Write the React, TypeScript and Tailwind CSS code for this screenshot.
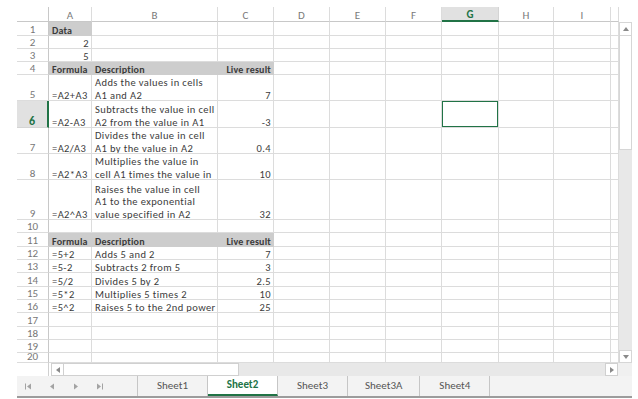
import React from 'react';

type Cell = { t?: string | string[]; b?: boolean; f?: boolean; r?: boolean };
type Row = { n: number; c: Cell[] };

const rows: Row[] = [
  { n: 1, c: [{ t: 'Data', b: true, f: true }] },
  { n: 2, c: [{ t: '2', r: true }] },
  { n: 3, c: [{ t: '5', r: true }] },
  { n: 4, c: [{ t: 'Formula', b: true, f: true }, { t: 'Description', b: true, f: true }, { t: 'Live result', b: true, f: true, r: true }] },
  { n: 5, c: [{ t: '=A2+A3' }, { t: ['Adds the values in cells', 'A1 and A2'] }, { t: '7', r: true }] },
  { n: 6, c: [{ t: '=A2-A3' }, { t: ['Subtracts the value in cell', 'A2 from the value in A1'] }, { t: '-3', r: true }] },
  { n: 7, c: [{ t: '=A2/A3' }, { t: ['Divides the value in cell', 'A1 by the value in A2'] }, { t: '0.4', r: true }] },
  { n: 8, c: [{ t: '=A2*A3' }, { t: ['Multiplies the value in', 'cell A1 times the value in'] }, { t: '10', r: true }] },
  { n: 9, c: [{ t: '=A2^A3' }, { t: ['Raises the value in cell', 'A1 to the exponential', 'value specified in A2'] }, { t: '32', r: true }] },
  { n: 10, c: [] },
  { n: 11, c: [{ t: 'Formula', b: true, f: true }, { t: 'Description', b: true, f: true }, { t: 'Live result', b: true, f: true, r: true }] },
  { n: 12, c: [{ t: '=5+2' }, { t: 'Adds 5 and 2' }, { t: '7', r: true }] },
  { n: 13, c: [{ t: '=5-2' }, { t: 'Subtracts 2 from 5' }, { t: '3', r: true }] },
  { n: 14, c: [{ t: '=5/2' }, { t: 'Divides 5 by 2' }, { t: '2.5', r: true }] },
  { n: 15, c: [{ t: '=5*2' }, { t: 'Multiplies 5 times 2' }, { t: '10', r: true }] },
  { n: 16, c: [{ t: '=5^2' }, { t: 'Raises 5 to the 2nd power' }, { t: '25', r: true }] },
  { n: 17, c: [] },
  { n: 18, c: [] },
  { n: 19, c: [] },
  { n: 20, c: [] },
];

const letters = ['A', 'B', 'C', 'D', 'E', 'F', 'G', 'H', 'I', ''];

function DataCell({ cell, selected }: { cell?: Cell; selected?: boolean }) {
  const fill = cell?.f;
  const lines = cell?.t === undefined ? [] : Array.isArray(cell.t) ? cell.t : [cell.t];
  return (
    <div
      className={
        'relative flex flex-col justify-end overflow-hidden whitespace-nowrap border-r border-b leading-[12.5px] text-[#3b3b3b] ' +
        (fill ? 'bg-[#cdcdcd] border-[#cdcdcd] ' : 'border-[#dcdcdc] ') +
        (cell?.r ? 'items-end pr-[2px] ' : 'items-start pl-[3px] ') +
        (cell?.b ? 'text-[10px] font-bold tracking-[0.2px]' : 'text-[10.5px] font-normal tracking-[0.4px]')
      }
    >
      {lines.map((l, i) => (
        <span key={i} className="block last:mb-[-2px]">{l}</span>
      ))}
      {selected && <div className="absolute inset-[-1px] border-2 border-[#217346]" />}
    </div>
  );
}

function Tri({ dir }: { dir: 'l' | 'r' | 'u' | 'd' }) {
  const p = {
    l: '4,0 4,6 0,3',
    r: '0,0 0,6 4,3',
    u: '0,4 6,4 3,0',
    d: '0,0 6,0 3,4',
  }[dir];
  const w = dir === 'l' || dir === 'r' ? 4 : 6;
  const h = dir === 'l' || dir === 'r' ? 6 : 4;
  return (
    <svg width={w} height={h} viewBox={`0 0 ${w} ${h}`}>
      <polygon points={p} fill="#8a8a8a" />
    </svg>
  );
}

function NavIcon({ kind }: { kind: 0 | 1 | 2 | 3 }) {
  return (
    <svg width="8" height="7" viewBox="0 0 8 7">
      {kind === 0 && (
        <>
          <rect x="1" y="0.5" width="1" height="6" fill="#a3a3a3" />
          <polygon points="7,0.5 7,6.5 3,3.5" fill="#a3a3a3" />
        </>
      )}
      {kind === 1 && <polygon points="6,0.5 6,6.5 2,3.5" fill="#a3a3a3" />}
      {kind === 2 && <polygon points="2,0.5 2,6.5 6,3.5" fill="#a3a3a3" />}
      {kind === 3 && (
        <>
          <polygon points="1,0.5 1,6.5 5,3.5" fill="#a3a3a3" />
          <rect x="6" y="0.5" width="1" height="6" fill="#a3a3a3" />
        </>
      )}
    </svg>
  );
}

export default function App() {
  const sheets = ['Sheet1', 'Sheet2', 'Sheet3', 'Sheet3A', 'Sheet4'];
  return (
    <div
      className="w-[638px] h-[399px] overflow-hidden bg-white pl-[17px] pt-[7px]"
      style={{ fontFamily: "Carlito, Lato, 'Liberation Sans', sans-serif" }}
    >
      <div className="flex w-[615px] flex-col">
        {/* grid + vertical scrollbar */}
        <div className="flex h-[356px]">
          <div className="h-[356px] w-[602px] overflow-hidden">
            <div className="grid grid-cols-[32px_43px_126px_56px_56px_56px_56px_57px_55px_57px_8px] grid-rows-[15px_14px_13px_13px_13px_26px_27px_26px_26px_40px_13px_14px_13px_13px_14px_13px_13px_14px_13px_13px_10px]">
              {/* header row */}
              <div className="border-r border-b border-[#c8c8c8]" />
              {letters.map((l, i) =>
                l === 'G' ? (
                  <div
                    key={i}
                    className="flex items-center justify-center border-r border-r-[#d4d4d4] border-b-2 border-b-[#217346] bg-[#e1e1e1] pt-[2px] text-[11px] font-bold leading-none text-[#217346]"
                  >
                    {l}
                  </div>
                ) : (
                  <div
                    key={i}
                    className="flex items-center justify-center border-r border-b border-r-[#dcdcdc] border-b-[#c8c8c8] pt-[2px] text-[11px] leading-none text-[#7a7a7a]"
                  >
                    {l}
                  </div>
                )
              )}
              {rows.map((row) => (
                <React.Fragment key={row.n}>
                  {row.n === 6 ? (
                    <div className="flex items-end justify-center border-b border-b-[#d4d4d4] border-r-2 border-r-[#217346] bg-[#e1e1e1] text-[12px] font-bold leading-[11px] text-[#217346]">
                      {row.n}
                    </div>
                  ) : (
                    <div className="flex items-end justify-center border-r border-b border-r-[#c8c8c8] border-b-[#dcdcdc] text-[11px] leading-[10px] text-[#777777]">
                      {row.n}
                    </div>
                  )}
                  {letters.map((l, ci) => (
                    <DataCell key={ci} cell={row.c[ci]} selected={row.n === 6 && l === 'G'} />
                  ))}
                </React.Fragment>
              ))}
            </div>
          </div>
          {/* vertical scrollbar */}
          <div className="flex w-[13px] flex-col">
            <div className="h-[15px] bg-white" />
            <div className="flex flex-1 flex-col bg-[#e8e8e8]">
              <div className="flex h-[14px] items-center justify-center border border-[#d6d6d6] bg-white">
                <Tri dir="u" />
              </div>
              <div className="h-[114px] border-x border-b border-[#d6d6d6] bg-white" />
              <div className="flex-1" />
              <div className="flex h-[13px] items-center justify-center border border-[#d6d6d6] bg-white">
                <Tri dir="d" />
              </div>
            </div>
          </div>
        </div>

        {/* horizontal scrollbar */}
        <div className="flex h-[13px]">
          <div className="w-[32px] border-r border-[#d0d0d0] bg-white" />
          <div className="flex flex-1 bg-[#e8e8e8]">
            <div className="w-[2px] bg-white" />
            <div className="flex w-[13px] items-center justify-center border border-[#d0d0d0] bg-white">
              <Tri dir="l" />
            </div>
            <div className="w-[175px] border-y border-r border-[#d0d0d0] bg-white" />
            <div className="flex-1" />
            <div className="flex w-[13px] items-center justify-center border border-[#d0d0d0] bg-white">
              <Tri dir="r" />
            </div>
            <div className="w-[14px] bg-[#f0f0f0]" />
          </div>
        </div>

        {/* sheet tabs */}
        <div className="flex h-[20px] bg-[#f3f3f3]">
          <div className="flex w-[120px] items-center gap-[16px] pl-[7px]">
            <NavIcon kind={0} />
            <NavIcon kind={1} />
            <NavIcon kind={2} />
            <NavIcon kind={3} />
          </div>
          <div className="flex border-l border-[#c6c6c6]">
            {sheets.map((s) =>
              s === 'Sheet2' ? (
                <div
                  key={s}
                  className="flex min-w-[70px] items-center justify-center border-r border-r-[#c6c6c6] border-b-2 border-b-[#217346] bg-white px-[17px] pt-[1px] text-[11px] font-bold text-[#217346]"
                >
                  {s}
                </div>
              ) : (
                <div
                  key={s}
                  className="flex min-w-[70px] items-center justify-center border-r border-[#c6c6c6] px-[17px] text-[11px] text-[#555555]"
                >
                  {s}
                </div>
              )
            )}
          </div>
        </div>
        <div className="h-[2px] bg-[#9c9c9c]" />
      </div>
    </div>
  );
}
